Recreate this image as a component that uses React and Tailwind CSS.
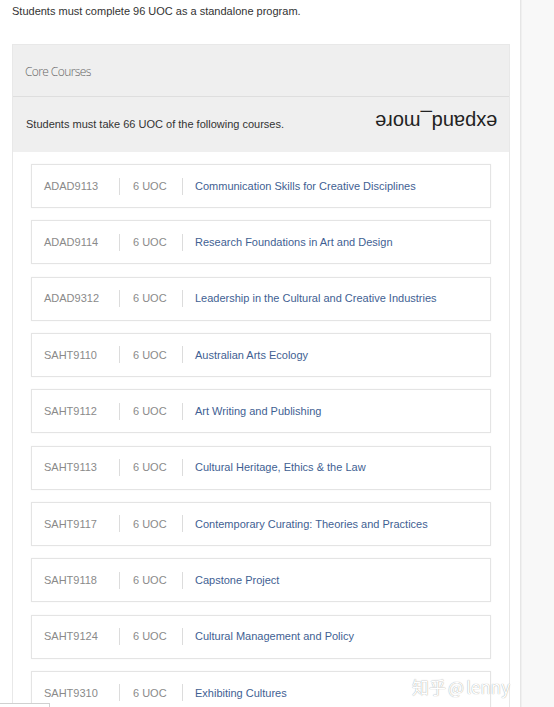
import React from "react";

const courses = [
  { code: "ADAD9113", uoc: "6 UOC", title: "Communication Skills for Creative Disciplines" },
  { code: "ADAD9114", uoc: "6 UOC", title: "Research Foundations in Art and Design" },
  { code: "ADAD9312", uoc: "6 UOC", title: "Leadership in the Cultural and Creative Industries" },
  { code: "SAHT9110", uoc: "6 UOC", title: "Australian Arts Ecology" },
  { code: "SAHT9112", uoc: "6 UOC", title: "Art Writing and Publishing" },
  { code: "SAHT9113", uoc: "6 UOC", title: "Cultural Heritage, Ethics & the Law" },
  { code: "SAHT9117", uoc: "6 UOC", title: "Contemporary Curating: Theories and Practices" },
  { code: "SAHT9118", uoc: "6 UOC", title: "Capstone Project" },
  { code: "SAHT9124", uoc: "6 UOC", title: "Cultural Management and Policy" },
  { code: "SAHT9310", uoc: "6 UOC", title: "Exhibiting Cultures" },
];

const CourseRow = ({ course }) => (
  <div className="flex h-[44px] shrink-0 items-center border border-[#e4e4e4] bg-white text-[11px] shadow-[0_0_2px_rgba(0,0,0,0.04)]">
    <span className="w-[87px] pl-[12px] text-[#8a8a8a]">{course.code}</span>
    <span className="h-[17px] w-px bg-[#dcdcdc]" />
    <span className="w-[62px] pl-[13px] text-[#8a8a8a]">{course.uoc}</span>
    <span className="h-[17px] w-px bg-[#dcdcdc]" />
    <span className="pl-[12px] text-[#3f5f93]">{course.title}</span>
  </div>
);

const App = () => {
  return (
    <div className="relative flex h-[707px] w-[554px] overflow-hidden bg-white font-['Liberation_Sans',Arial,sans-serif] text-[#333]">
      <div className="w-[521px] shrink-0 border-r border-[#e6e6e6]">
        <p className="pl-[12px] pt-[4px] text-[11px] leading-[15px] text-[#333]">
          Students must complete 96 UOC as a standalone program.
        </p>

        <div className="ml-[12px] mt-[25px] w-[498px] border border-[#e8e8e8]">
          <div className="flex h-[52px] items-center border-b border-[#dedede] bg-[#efefef] pl-[12px] pt-[3px]">
            <span className="font-['Open_Sans',sans-serif] text-[12px] font-light tracking-[-0.6px] text-[#666]">
              Core Courses
            </span>
          </div>
          <div className="flex h-[55px] items-center justify-between bg-[#efefef] pl-[13px] pr-[12px]">
            <span className="text-[11px] text-[#333]">
              Students must take 66 UOC of the following courses.
            </span>
            <span className="mb-[5px] rotate-180 text-[20px] leading-none text-[#222]">
              expand_more
            </span>
          </div>
          <div className="flex flex-col gap-[12.33px] bg-white px-[18px] pb-[20px] pt-[12px]">
            {courses.map((course) => (
              <CourseRow key={course.code} course={course} />
            ))}
          </div>
        </div>
      </div>
      <div className="flex-1 border-l border-[#f0f0f0] bg-[#f8f8f8]" />

      <div className="absolute bottom-[8px] right-[44px] flex items-center gap-[2px] font-['Noto_Sans_CJK_SC',sans-serif] text-[17px] text-[#ffffff] [text-shadow:0_0_1px_#8a8a8a]">
        <span>知乎</span>
        <span>@</span>
        <span>lenny</span>
      </div>
      <div className="absolute bottom-0 left-0 h-[4px] w-[50px] border-t border-r border-[#d0d0d0] bg-white" />
    </div>
  );
};

export default App;
